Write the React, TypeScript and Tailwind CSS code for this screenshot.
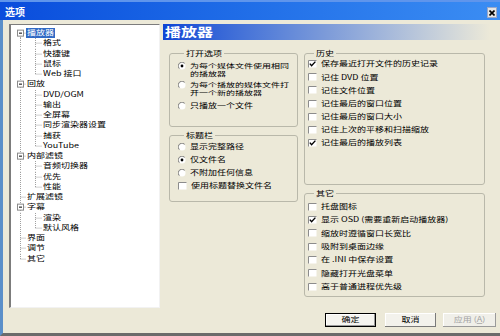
import React from "react";

type TreeRow = {
  label: string;
  level: 1 | 2;
  parent?: boolean;
  end?: boolean;
  selected?: boolean;
};

const tree: TreeRow[] = [
  { label: "播放器", level: 1, parent: true, selected: true },
  { label: "格式", level: 2 },
  { label: "快捷键", level: 2 },
  { label: "鼠标", level: 2 },
  { label: "Web 接口", level: 2, end: true },
  { label: "回放", level: 1, parent: true },
  { label: "DVD/OGM", level: 2 },
  { label: "输出", level: 2 },
  { label: "全屏幕", level: 2 },
  { label: "同步渲染器设置", level: 2 },
  { label: "捕获", level: 2 },
  { label: "YouTube", level: 2, end: true },
  { label: "内部滤镜", level: 1, parent: true },
  { label: "音频切换器", level: 2 },
  { label: "优先", level: 2 },
  { label: "性能", level: 2, end: true },
  { label: "扩展滤镜", level: 1 },
  { label: "字幕", level: 1, parent: true },
  { label: "渲染", level: 2 },
  { label: "默认风格", level: 2, end: true },
  { label: "界面", level: 1 },
  { label: "调节", level: 1 },
  { label: "其它", level: 1 },
];

const ROW_H = 10.25;

// the old dialog is squashed vertically, so glyphs are drawn a bit flatter
function T({ children, tight }: { children: React.ReactNode; tight?: boolean }) {
  return <span className={`inline-block whitespace-nowrap ${tight ? "scale-y-[0.64]" : "scale-y-[0.78]"}`}>{children}</span>;
}

// dotted connector cell of the tree view
function Gutter({ w, x, vert, horiz, box }: { w: number; x: number; vert: "full" | "top" | "bottom"; horiz: boolean; box?: boolean }) {
  const c = ROW_H / 2;
  const y1 = vert === "bottom" ? c : 0;
  const y2 = vert === "top" ? c : ROW_H;
  return (
    <svg width={w} height={ROW_H} className="shrink-0">
      <line x1={x} y1={y1} x2={x} y2={y2} stroke="#a0a0a0" strokeDasharray="1 1" />
      {horiz && <line x1={x} y1={c} x2={w} y2={c} stroke="#a0a0a0" strokeDasharray="1 1" />}
      {box && (
        <>
          <rect x={x - 3} y={c - 3} width={6} height={6} fill="#fff" stroke="#8a8a8a" />
          <line x1={x - 1.5} y1={c} x2={x + 1.5} y2={c} stroke="#000" />
        </>
      )}
    </svg>
  );
}

function Radio({ checked }: { checked?: boolean }) {
  return (
    <svg width="8" height="8" viewBox="0 0 8 8" className="shrink-0">
      <circle cx="4" cy="4" r="3.5" fill="#fff" />
      <path d="M1.3 6.7 A3.5 3.5 0 0 1 6.7 1.3" stroke="#7a7a7a" fill="none" />
      {checked && <circle cx="4" cy="4" r="1.4" fill="#000" />}
    </svg>
  );
}

function Check({ checked }: { checked?: boolean }) {
  return (
    <svg width="9" height="8" viewBox="0 0 9 8" className="shrink-0">
      <rect x="0.5" y="0.5" width="8" height="7" fill="#fff" />
      <path d="M0.5 7.5 V0.5 H8.5" stroke="#8c8c8c" fill="none" />
      {checked && <path d="M1.8 3.6 L3.6 5.8 L7.4 1.6" stroke="#000" strokeWidth="1.4" fill="none" />}
    </svg>
  );
}

function Group({ title, className, children }: { title: string; className: string; children: React.ReactNode }) {
  return (
    <fieldset className={`border border-[#b9b8aa] rounded-[3px] ${className}`}>
      <legend className="ml-[6px] px-[2px] leading-[9px]"><T>{title}</T></legend>
      {children}
    </fieldset>
  );
}

function CheckRow({ label, checked, h }: { label: string; checked?: boolean; h: string }) {
  return (
    <div className={`flex items-center gap-[4px] ${h}`}>
      <Check checked={checked} />
      <T>{label}</T>
    </div>
  );
}

function RadioRow({ lines, checked, className = "" }: { lines: string[]; checked?: boolean; className?: string }) {
  const multi = lines.length > 1;
  return (
    <div className={`flex items-start gap-[4px] leading-[8.5px] ${className}`}>
      <div className="pt-[0.5px]">
        <Radio checked={checked} />
      </div>
      <div>
        {lines.map((l) => (
          <div key={l} className="h-[8.5px]"><T tight={multi}>{l}</T></div>
        ))}
      </div>
    </div>
  );
}

export default function App() {
  const history = [
    { label: "保存最近打开文件的历史记录", checked: true },
    { label: "记住 DVD 位置" },
    { label: "记住文件位置" },
    { label: "记住最后的窗口位置" },
    { label: "记住最后的窗口大小" },
    { label: "记住上次的平移和扫描缩放" },
    { label: "记住最后的播放列表", checked: true },
  ];
  const misc = [
    { label: "托盘图标" },
    { label: "显示 OSD (需要重新启动播放器)", checked: true },
    { label: "缩放时遵循窗口长宽比" },
    { label: "吸附到桌面边缘" },
    { label: "在 .INI 中保存设置" },
    { label: "隐藏打开光盘菜单" },
    { label: "高于普通进程优先级" },
  ];

  return (
    <div className="w-[500px] h-[336px] flex flex-col bg-[#ece9d8] text-[9px] text-black font-['Noto_Sans_CJK_SC',sans-serif] overflow-hidden">
      {/* title bar */}
      <div className="h-[20px] shrink-0 flex items-center justify-between border-t-2 border-[#5f95ec] bg-linear-to-r from-[#0a4cdc] to-[#3b8df3]">
        <span className="pl-[5px] pt-[2px] text-[10px] font-bold leading-[10px] text-white">选项</span>
        <div className="mr-[3px] mt-[3px] w-[10px] h-[11px] flex items-center justify-center bg-[#e4e4e4] border border-[#9aa8c8]">
          <svg width="6" height="6" viewBox="0 0 6 6">
            <path d="M0.5 0.5 L5.5 5.5 M5.5 0.5 L0.5 5.5" stroke="#000" strokeWidth="1.6" />
          </svg>
        </div>
      </div>

      <div className="flex-1 flex flex-col border-l-[3px] border-[#5b8fc9] border-b-[3px] border-b-[#6b6b6b]">
        <div className="flex pt-[4px] pl-[6px] gap-[3px]">
          {/* tree */}
          <div className="w-[151px] h-[284px] bg-white border-t border-l-2 border-[#7c7c7c] border-r border-b border-r-[#f2f2f2] border-b-[#f2f2f2] pt-[3px]">
            {tree.map((r, i) => {
              const lastRoot = i === tree.length - 1;
              return (
                <div key={r.label} className="flex h-[10.25px] leading-[10.25px]">
                  {r.level === 1 ? (
                    <Gutter w={15} x={9.5} vert={i === 0 ? "bottom" : lastRoot ? "top" : "full"} horiz box={r.parent} />
                  ) : (
                    <>
                      <Gutter w={15} x={9.5} vert="full" horiz={false} />
                      <Gutter w={16} x={9.5} vert={r.end ? "top" : "full"} horiz />
                    </>
                  )}
                  <span className={`h-[10.25px] px-[1px] ${r.selected ? "bg-[#316ac5] text-white" : ""}`}><T>{r.label}</T></span>
                </div>
              );
            })}
          </div>

          {/* right panel */}
          <div className="w-[327px] flex flex-col">
            <div className="h-[16px] flex items-center pl-[2px] bg-linear-to-r from-[#0f44d4] via-[#7d9bd9] to-[#ece9d8]">
              <span className="text-[16px] leading-[16px] font-bold text-white"><T>播放器</T></span>
            </div>
            <div className="flex gap-[6px] pl-[6px] mt-[8.5px]">
              <div className="w-[129px] flex flex-col gap-[4.5px]">
                <Group title="打开选项" className="pl-[8px] pb-[15.5px]">
                  <RadioRow lines={["为每个媒体文件使用相同", "的播放器"]} checked className="mt-[4px]" />
                  <RadioRow lines={["为每个播放的媒体文件打", "开一个新的播放器"]} className="mt-[2px]" />
                  <RadioRow lines={["只播放一个文件"]} className="mt-[4px]" />
                </Group>
                <Group title="标题栏" className="pl-[8px] pb-[9px]">
                  <div className="flex items-center gap-[4px] h-[13px]"><Radio /><T>显示完整路径</T></div>
                  <div className="flex items-center gap-[4px] h-[13px]"><Radio checked /><T>仅文件名</T></div>
                  <div className="flex items-center gap-[4px] h-[13px]"><Radio /><T>不附加任何信息</T></div>
                  <CheckRow label="使用标题替换文件名" h="h-[13px]" />
                </Group>
              </div>
              <div className="w-[181px] flex flex-col gap-[4.5px]">
                <Group title="历史" className="pl-[3px] pb-[34px]">
                  {history.map((h) => (
                    <CheckRow key={h.label} label={h.label} checked={h.checked} h="h-[13.2px]" />
                  ))}
                </Group>
                <Group title="其它" className="pl-[3px] pt-[1.8px] pb-[3px]">
                  {misc.map((h) => (
                    <CheckRow key={h.label} label={h.label} checked={h.checked} h="h-[13.33px]" />
                  ))}
                </Group>
              </div>
            </div>
          </div>
        </div>

        {/* buttons */}
        <div className="flex justify-end pr-[4px] mt-[5px] h-[14px]">
          <button className="w-[51px] h-[14px] border border-black bg-[#f5f4ef] shadow-[inset_-1px_-1px_#9a9a9a,inset_1px_1px_#fff] leading-[12px]"><T>确定</T></button>
          <button className="ml-[9px] w-[51px] h-[14px] bg-[#f3f2ec] shadow-[inset_-1px_-1px_#7a7a7a,inset_1px_1px_#fff] leading-[14px]"><T>取消</T></button>
          <button className="ml-[7px] w-[53px] h-[14px] bg-[#f0efe9] shadow-[inset_-1px_-1px_#9a9a9a,inset_1px_1px_#fff] leading-[14px] text-[#a3a3a3]"><T>应用 (<span className="underline">A</span>)</T></button>
        </div>
      </div>
    </div>
  );
}
